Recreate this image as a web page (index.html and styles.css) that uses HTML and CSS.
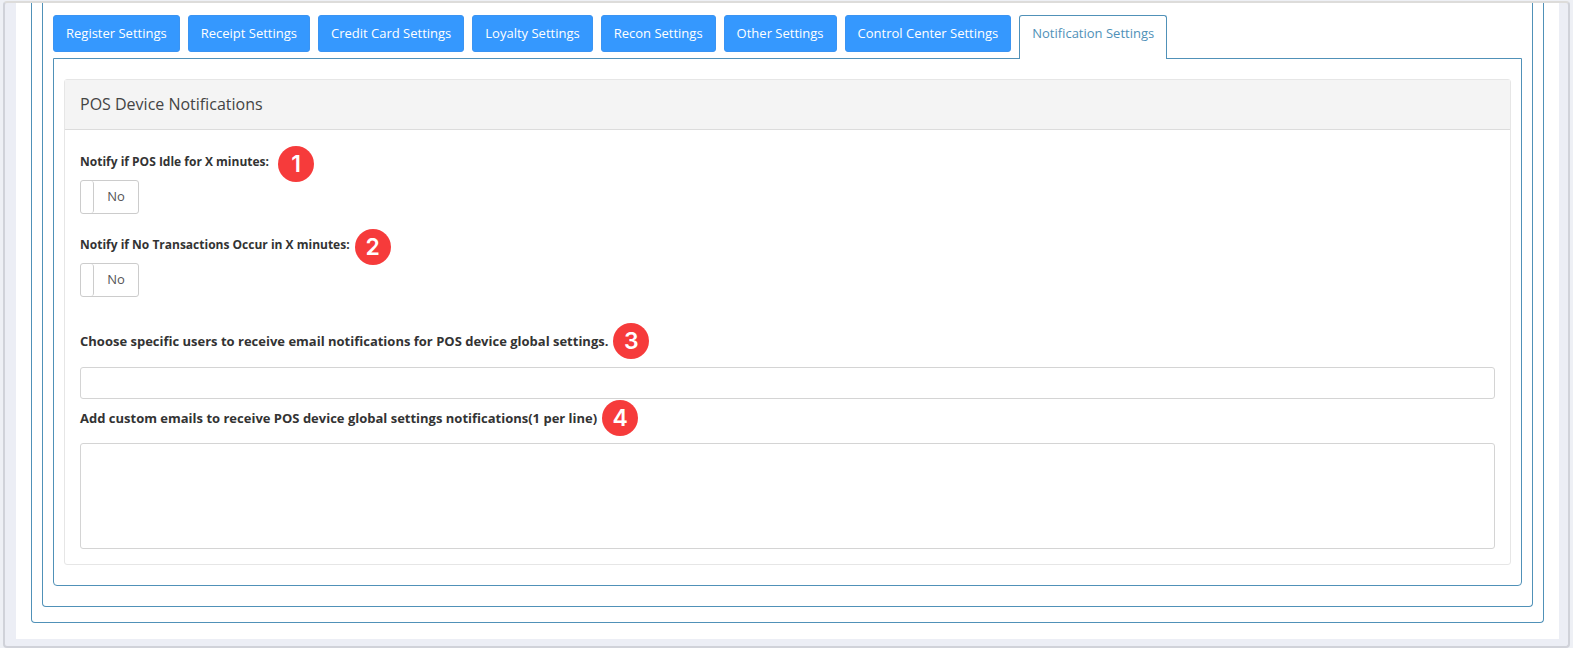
FILE: index.html
```html
<!DOCTYPE html>
<html lang="en">
<head>
<meta charset="utf-8">
<title>Notification Settings</title>
<link rel="stylesheet" href="styles.css">
</head>
<body>
<div class="frame">
  <main class="page">
    <div class="outline outline-outer">
      <div class="outline outline-inner">
        <div class="tabs" role="tablist">
          <button class="tab" type="button" role="tab">Register Settings</button>
          <button class="tab" type="button" role="tab">Receipt Settings</button>
          <button class="tab" type="button" role="tab">Credit Card Settings</button>
          <button class="tab" type="button" role="tab">Loyalty Settings</button>
          <button class="tab" type="button" role="tab">Recon Settings</button>
          <button class="tab" type="button" role="tab">Other Settings</button>
          <button class="tab" type="button" role="tab">Control Center Settings</button>
          <button class="tab tab-active" type="button" role="tab" aria-selected="true">Notification Settings</button>
        </div>
        <div class="tab-content" role="tabpanel">
          <section class="panel">
            <h1 class="panel-heading">POS Device Notifications</h1>
            <form class="panel-body">
              <div class="toggle-group">
                <div class="label-row label-row-wide">
                  <label class="label label-small" for="idle">Notify if POS Idle for X minutes:</label>
                  <span class="badge">1</span>
                </div>
                <div class="switch">
                  <input class="switch-input" type="checkbox" role="switch" id="idle">
                  <span class="switch-handle"></span>
                  <span class="switch-text">No</span>
                </div>
              </div>
              <div class="toggle-group">
                <div class="label-row">
                  <label class="label label-small" for="transactions">Notify if No Transactions Occur in X minutes:</label>
                  <span class="badge">2</span>
                </div>
                <div class="switch">
                  <input class="switch-input" type="checkbox" role="switch" id="transactions">
                  <span class="switch-handle"></span>
                  <span class="switch-text">No</span>
                </div>
              </div>
              <div class="field-group">
                <div class="label-row">
                  <label class="label" for="users">Choose specific users to receive email notifications for POS device global settings.</label>
                  <span class="badge">3</span>
                </div>
                <input class="field" type="text" id="users">
              </div>
              <div class="field-group">
                <div class="label-row">
                  <label class="label" for="emails">Add custom emails to receive POS device global settings notifications(1 per line)</label>
                  <span class="badge">4</span>
                </div>
                <textarea class="field field-area" id="emails"></textarea>
              </div>
            </form>
          </section>
        </div>
      </div>
    </div>
  </main>
</div>
</body>
</html>
```

FILE: styles.css
```css
* {
  box-sizing: border-box;
}

body {
  margin: 0;
  padding: 1px 3px;
  background: #eef0f5;
  color: #333;
  font-family: "Open Sans", "Noto Sans", sans-serif;
  font-size: 13px;
  line-height: 20px;
}

.frame {
  padding: 0 9px 7px 11px;
  border: 2px solid #d0d2d9;
  border-top-color: #dddcda;
  border-radius: 4px;
  background: #eceef5;
}

.page {
  padding: 0 15px 16px;
  background: #fff;
}

.outline {
  border: 1px solid #5091b8;
  border-top: 0;
  border-radius: 0 0 4px 4px;
}

.outline-outer {
  padding: 0 10px 15px;
}

.outline-inner {
  padding: 12px 10px 20px;
}

.tabs {
  display: flex;
  align-items: flex-start;
  gap: 8px;
}

.tab {
  height: 37px;
  margin-bottom: 6px;
  padding: 0 12px 2px;
  border: 1px solid #3b94f2;
  border-radius: 3px;
  background: #3598fe;
  color: #fff;
  font: inherit;
  white-space: nowrap;
}

.tab-active {
  position: relative;
  height: 44px;
  margin-bottom: -1px;
  padding-bottom: 10px;
  border-color: #5091b8;
  border-bottom: 0;
  border-radius: 3px 3px 0 0;
  background: #fff;
  color: #5091b8;
}

.tab-content {
  padding: 20px 10px;
  border: 1px solid #5091b8;
  border-radius: 0 0 4px 4px;
}

.panel {
  border: 1px solid #e6e6e6;
  border-radius: 3px;
}

.panel-heading {
  margin: 0;
  padding: 14px 15px 15px;
  border-bottom: 1px solid #dcdcdc;
  background: #f4f4f4;
  color: #444;
  font-size: 16px;
  font-weight: 400;
  line-height: 20px;
}

.panel-body {
  padding: 22px 15px 15px;
}

.toggle-group {
  margin-bottom: 21px;
}

.label-row {
  display: flex;
  align-items: center;
  gap: 5px;
  height: 20px;
}

.label-row-wide {
  gap: 9px;
}

.label {
  font-weight: 700;
}

.label-small {
  font-size: 12px;
}

.badge {
  display: flex;
  flex: none;
  align-items: center;
  justify-content: center;
  width: 36px;
  height: 36px;
  border-radius: 50%;
  background: #f63b3b;
  color: #fff;
  font-family: Inter, "Liberation Sans", sans-serif;
  font-size: 23px;
  font-weight: 600;
  z-index: 1;
}

.toggle-group .badge {
  margin-top: 4px;
}

.switch {
  display: flex;
  position: relative;
  width: 59px;
  height: 34px;
  margin-top: 8px;
  border: 1px solid #ccc;
  border-radius: 3px;
  overflow: hidden;
}

.switch-input {
  position: absolute;
  inset: 0;
  width: 100%;
  height: 100%;
  margin: 0;
  appearance: none;
  cursor: pointer;
}

.switch-handle {
  width: 13px;
  border-right: 1px solid #ccc;
  border-radius: 0 3px 3px 0;
}

.switch-text {
  flex: 1;
  color: #555;
  line-height: 30px;
  text-align: center;
}

.field-group {
  margin-bottom: 9px;
}

.toggle-group + .field-group {
  margin-top: 34px;
}

.field-group:last-child {
  margin-bottom: 0;
}

.field {
  display: block;
  width: 100%;
  height: 32px;
  margin-top: 16px;
  padding: 4px 12px;
  border: 1px solid #d4d4d4;
  border-radius: 3px;
  background: #fff;
  color: inherit;
  font: inherit;
}

.field-area {
  height: 106px;
  margin-top: 15px;
  resize: none;
}
```
